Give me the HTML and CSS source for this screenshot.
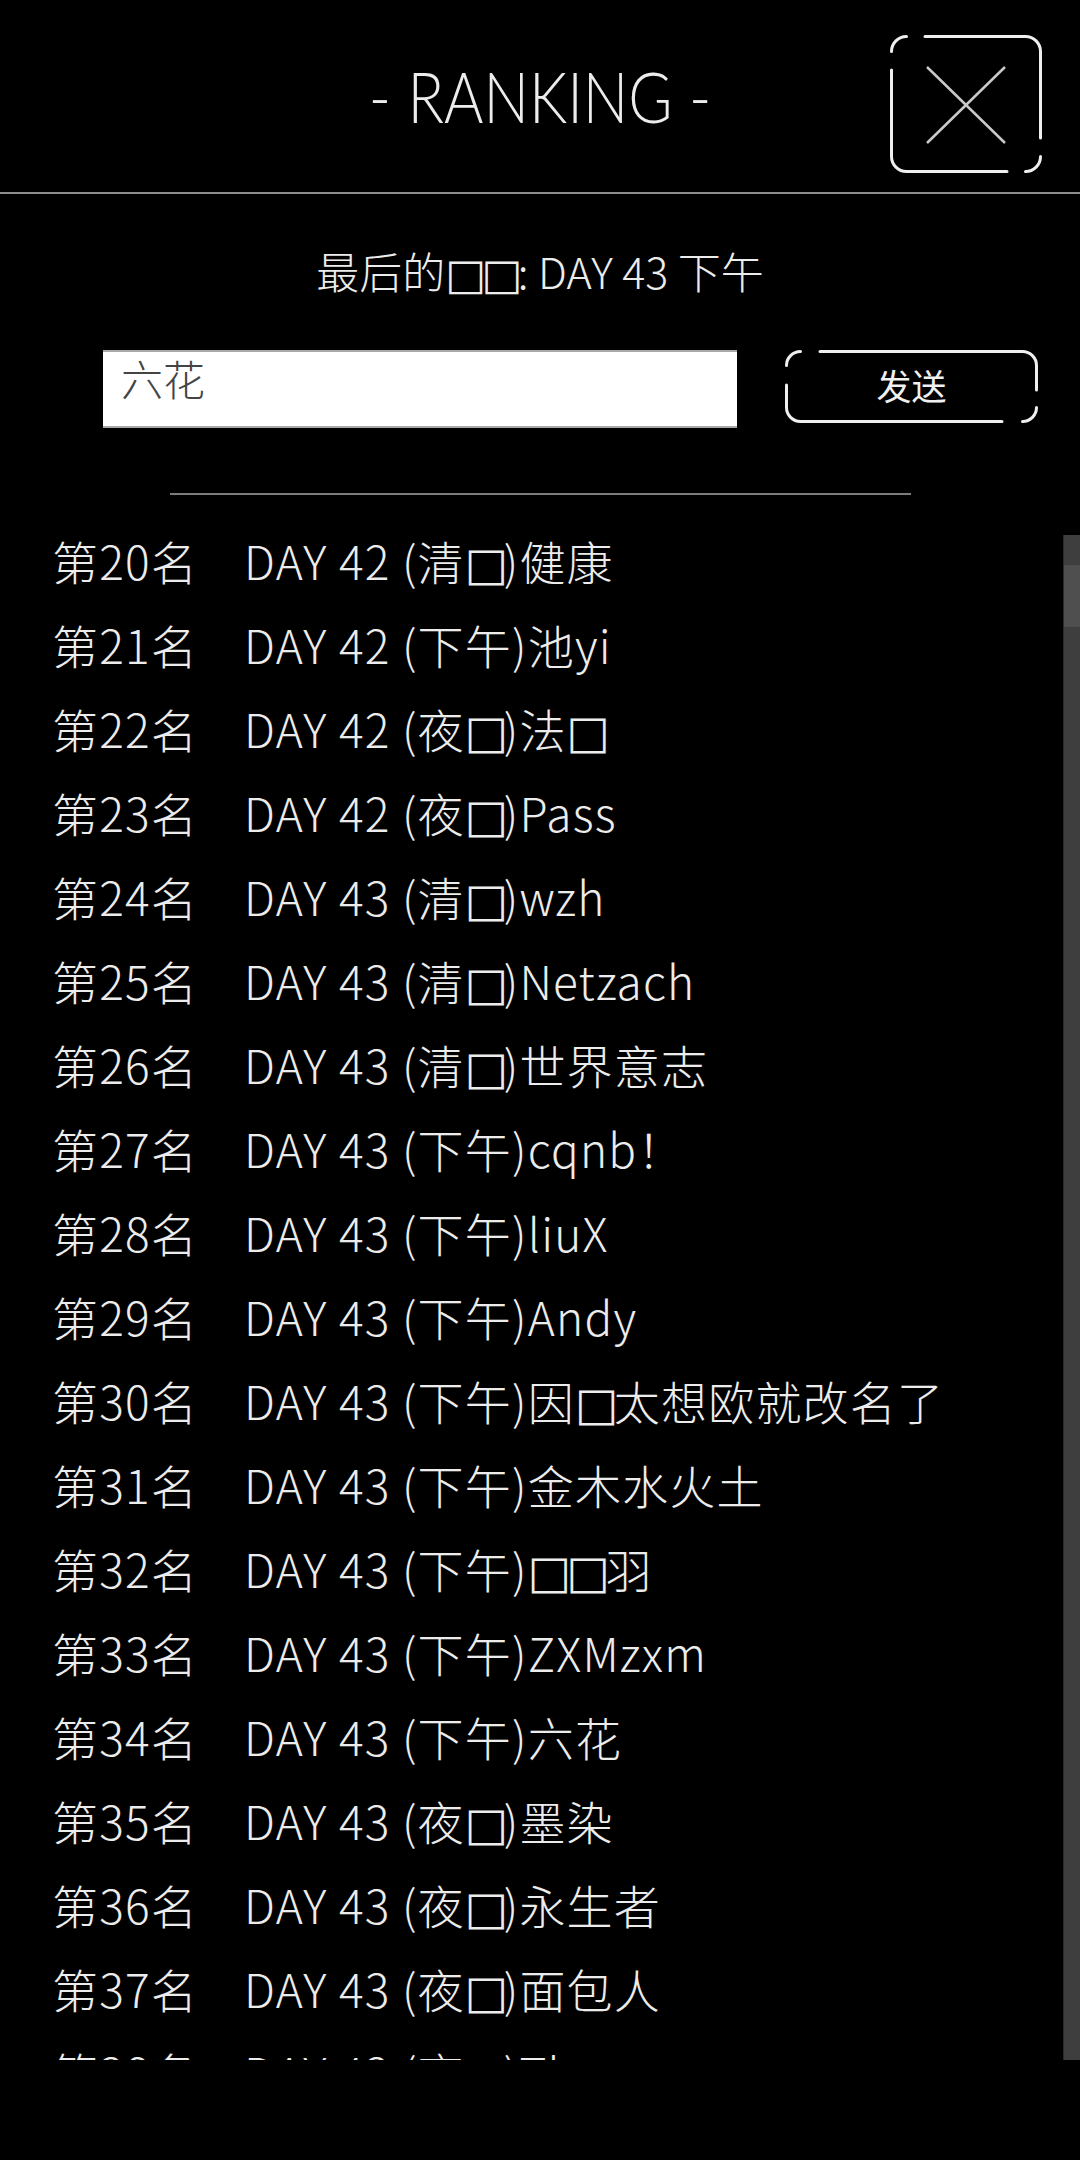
FILE: index.html
```html
<!DOCTYPE html>
<html lang="zh-CN">
<head>
    <meta charset="UTF-8">
    <meta name="viewport" content="width=device-width, initial-scale=1.0">
    <title>RANKING</title>
    <link rel="stylesheet" href="styles.css">
</head>
<body>

<div class="header">
    <div></div>
    <h1 class="title"><span>- RANKING -</span></h1>
    <button type="button" class="close" aria-label="关闭">
        <svg width="152" height="138" viewBox="0 0 152 138">
            <path class="frame" d="M1.5 16.5 A15 15 0 0 1 16.5 1.5 M35 1.5 H135.5 A15 15 0 0 1 150.5 16.5 V103 M150.5 121.5 A15 15 0 0 1 135.5 136.5 M117 136.5 H16.5 A15 15 0 0 1 1.5 121.5 V35"/>
            <path class="cross" d="M37 32 L115 108 M115 32 L37 108"/>
        </svg>
    </button>
</div>

<p class="last">最后的<span class="tofu">□□</span>: DAY 43 下午</p>

<form class="search" id="searchForm">
    <input type="text" id="name" name="name" value="六花">
    <button type="submit" class="send">
        <svg width="253" height="73" viewBox="0 0 253 73">
            <path class="frame" d="M1.5 15.5 A14 14 0 0 1 15.5 1.5 M35 1.5 H237.5 A14 14 0 0 1 251.5 15.5 V40 M251.5 57.5 A14 14 0 0 1 237.5 71.5 M217 71.5 H15.5 A14 14 0 0 1 1.5 57.5 V35"/>
        </svg>
        <span>发送</span>
    </button>
</form>

<div class="divider"></div>

<div class="board">
    <ul class="rank-list">
        <li><span class="rank">第20名</span>DAY 42 (清<span class="tofu">□</span>)健康</li>
        <li><span class="rank">第21名</span>DAY 42 (下午)池yi</li>
        <li><span class="rank">第22名</span>DAY 42 (夜<span class="tofu">□</span>)法<span class="tofu">□</span></li>
        <li><span class="rank">第23名</span>DAY 42 (夜<span class="tofu">□</span>)Pass</li>
        <li><span class="rank">第24名</span>DAY 43 (清<span class="tofu">□</span>)wzh</li>
        <li><span class="rank">第25名</span>DAY 43 (清<span class="tofu">□</span>)Netzach</li>
        <li><span class="rank">第26名</span>DAY 43 (清<span class="tofu">□</span>)世界意志</li>
        <li><span class="rank">第27名</span>DAY 43 (下午)cqnb！</li>
        <li><span class="rank">第28名</span>DAY 43 (下午)liuX</li>
        <li><span class="rank">第29名</span>DAY 43 (下午)Andy</li>
        <li><span class="rank">第30名</span>DAY 43 (下午)因<span class="tofu">□</span>太想欧就改名了</li>
        <li><span class="rank">第31名</span>DAY 43 (下午)金木水火土</li>
        <li><span class="rank">第32名</span>DAY 43 (下午)<span class="tofu">□□</span>羽</li>
        <li><span class="rank">第33名</span>DAY 43 (下午)ZXMzxm</li>
        <li><span class="rank">第34名</span>DAY 43 (下午)六花</li>
        <li><span class="rank">第35名</span>DAY 43 (夜<span class="tofu">□</span>)墨染</li>
        <li><span class="rank">第36名</span>DAY 43 (夜<span class="tofu">□</span>)永生者</li>
        <li><span class="rank">第37名</span>DAY 43 (夜<span class="tofu">□</span>)面包人</li>
        <li><span class="rank">第38名</span>DAY 43 (夜<span class="tofu">□</span>)Tk</li>
    </ul>
    <div class="scrollbar"><div class="thumb"></div></div>
</div>

</body>
</html>
```

FILE: styles.css
```css
body {
    margin: 0;
    width: 1080px;
    height: 2160px;
    overflow: hidden;
    background-color: #000;
    color: #ececec;
    font-family: "Noto Sans CJK SC", sans-serif;
}
.header {
    display: grid;
    grid-template-columns: 1fr auto 1fr;
    align-items: center;
    height: 192px;
    border-bottom: 2px solid #8c8c8c;
}
.title {
    margin: 0;
    font-family: Lato, "Noto Sans CJK SC", sans-serif;
    font-weight: 300;
    font-size: 70px;
    white-space: nowrap;
}
.title span {
    display: inline-block;
    transform: scaleX(0.86);
}
.close {
    justify-self: end;
    align-self: start;
    margin: 35px 38px 0 0;
    padding: 0;
    border: none;
    background: none;
    display: block;
}
.close svg, .send svg {
    display: block;
}
.frame {
    fill: none;
    stroke: #efefef;
    stroke-width: 3;
    stroke-linecap: round;
}
.cross {
    fill: none;
    stroke: #c9c9c9;
    stroke-width: 2.5;
}
.last {
    margin: 46px 0 0;
    text-align: center;
    font-size: 43px;
    font-weight: 300;
    line-height: 60px;
}
.tofu {
    font-family: "DejaVu Sans", sans-serif;
    font-weight: 400;
    line-height: 1;
    letter-spacing: -0.1em;
}
.search {
    display: flex;
    align-items: flex-start;
    gap: 48px;
    margin-top: 50px;
    padding: 0 42px 0 103px;
}
.search input {
    box-sizing: border-box;
    width: 634px;
    height: 78px;
    margin: 0;
    padding: 0 18px 24px;
    border: none;
    border-top: 2px solid #a8a8a8;
    border-bottom: 2px solid #a8a8a8;
    background-color: #fff;
    color: #444;
    font-family: "Noto Sans CJK SC", sans-serif;
    font-size: 42px;
    font-weight: 300;
    outline: none;
}
.send {
    display: grid;
    padding: 0;
    border: none;
    background: none;
    color: #f0f0f0;
    font-family: "Noto Sans CJK SC", sans-serif;
    font-size: 35px;
    cursor: pointer;
}
.send svg, .send span {
    grid-area: 1 / 1;
}
.send span {
    align-self: center;
    justify-self: center;
    margin-bottom: 4px;
}
.divider {
    width: 741px;
    height: 2px;
    margin: 65px auto 0;
    background-color: #7c7c7c;
}
.board {
    display: flex;
    height: 1525px;
    margin-top: 40px;
    overflow: hidden;
}
.rank-list {
    flex: 1;
    margin: -17px 0 0;
    padding: 0 0 0 52px;
    list-style: none;
    font-size: 46px;
    font-weight: 300;
    letter-spacing: 1.2px;
}
.rank-list li {
    height: 84px;
    line-height: 84px;
    white-space: nowrap;
}
.rank {
    margin-right: 46px;
}
.scrollbar {
    width: 16px;
    padding-top: 30px;
    border-left: 1px solid #2a2a2a;
    background-color: #3e3e3e;
}
.thumb {
    height: 62px;
    background-color: #4f4f4f;
}
```
